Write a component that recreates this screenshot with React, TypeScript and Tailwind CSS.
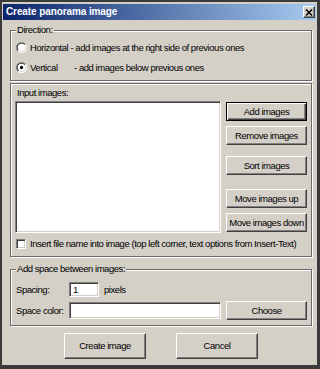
import React from "react";

const raised =
  "border border-t-white border-l-white border-r-[#404040] border-b-[#404040] shadow-[inset_-1px_-1px_0_#808080] bg-[#d4d0c8]";
const sunken =
  "border border-t-[#808080] border-l-[#808080] border-r-white border-b-white shadow-[inset_1px_1px_0_#404040,inset_-1px_-1px_0_#d4d0c8] bg-white";
const etched = "relative border border-[#6a6a6a] shadow-[1px_1px_0_#fff,inset_1px_1px_0_#fff]";

function Radio({ checked }: { checked?: boolean }) {
  return (
    <svg width="11" height="11" viewBox="0 0 12 12" className="shrink-0">
      <defs>
        <linearGradient id="rOuter" x1="0" y1="0" x2="1" y2="1">
          <stop offset="0.5" stopColor="#808080" />
          <stop offset="0.5" stopColor="#ffffff" />
        </linearGradient>
        <linearGradient id="rInner" x1="0" y1="0" x2="1" y2="1">
          <stop offset="0.5" stopColor="#404040" />
          <stop offset="0.5" stopColor="#d4d0c8" />
        </linearGradient>
      </defs>
      <circle cx="6" cy="6" r="6" fill="url(#rOuter)" />
      <circle cx="6" cy="6" r="5" fill="url(#rInner)" />
      <circle cx="6" cy="6" r="4" fill="#fff" />
      {checked && <circle cx="6" cy="6" r="1.8" fill="#000" />}
    </svg>
  );
}

function Btn({ label, def, className = "" }: { label: string; def?: boolean; className?: string }) {
  const cls = def
    ? "border border-black shadow-[inset_1px_1px_0_#fff,inset_-1px_-1px_0_#404040,inset_-2px_-2px_0_#808080] bg-[#d4d0c8]"
    : raised;
  return (
    <div className={`${cls} flex items-center justify-center text-black ${className}`}>{label}</div>
  );
}

export default function App() {
  return (
    <div className="w-[320px] h-[369px] bg-[#d4d0c8] border-l-2 border-t-2 border-r-[3px] border-b-[4px] border-[#3a3a3a] pl-[1px] pt-[2px] pr-[1px] font-['Liberation_Sans',Arial,sans-serif] text-[9.5px] tracking-[-0.45px] leading-[10px] text-black overflow-hidden">
      {/* title bar */}
      <div className="h-[16px] flex items-center justify-between pl-[3px] pr-[1px] bg-[linear-gradient(90deg,#0a246a,#a6caf0)]">
        <span className="text-white font-bold text-[10px] tracking-[-0.1px]">Create panorama image</span>
        <div className={`${raised} w-[12px] h-[12px] flex items-center justify-center`}>
          <svg width="8" height="7" viewBox="0 0 8 7">
            <path d="M1 0.5 L7 6.5 M7 0.5 L1 6.5" stroke="#000" strokeWidth="1.5" />
          </svg>
        </div>
      </div>

      <div className="pl-[7px] pr-[4px] flex flex-col">
        {/* Direction */}
        <div className={`${etched} mt-[10px] h-[51px] pl-[5px] pt-[11px] flex flex-col gap-[9px]`}>
          <span className="absolute left-[5px] -top-[6px] bg-[#d4d0c8] px-[1px]">Direction:</span>
          <div className="h-[11px] flex items-center gap-[3px]">
            <Radio />
            <span>Horizontal - add images at the right side of previous ones</span>
          </div>
          <div className="h-[11px] flex items-center gap-[3px]">
            <Radio checked />
            <span className="inline-block w-[41px]">Vertical</span>
            <span>- add images below previous ones</span>
          </div>
        </div>

        {/* Input images */}
        <div className={`${etched} mt-[2px] h-[174px] pl-[4px] pr-[4px] pt-[4px] flex flex-col`}>
          <span className="ml-[2px] h-[10px]">Input images:</span>
          <div className="mt-[3px] flex gap-[5px]">
            <div className={`${sunken} w-[206px] h-[132px]`} />
            <div className="flex flex-col w-[81px]">
              <Btn label="Add images" def className="mt-[1px] h-[19px]" />
              <Btn label="Remove images" className="mt-[5px] h-[19px]" />
              <Btn label="Sort images" className="mt-[11px] h-[19px]" />
              <Btn label="Move images up" className="mt-[14px] h-[19px]" />
              <Btn label="Move images down" className="mt-[5px] h-[19px]" />
            </div>
          </div>
          <div className="mt-[6px] h-[10px] flex items-center gap-[4px] ml-[1px]">
            <div className={`${sunken} w-[10px] h-[10px]`} />
            <span>Insert file name into image (top left corner, text options from Insert-Text)</span>
          </div>
        </div>

        {/* Add space */}
        <div className={`${etched} mt-[12px] h-[57px] pl-[5px] pt-[12px] flex flex-col`}>
          <span className="absolute left-[5px] -top-[6px] bg-[#d4d0c8] px-[1px]">Add space between images:</span>
          <div className="h-[15px] flex items-center">
            <span className="w-[53px]">Spacing:</span>
            <div className={`${sunken} w-[30px] h-[15px] pl-[3px] flex items-center`}>1</div>
            <span className="ml-[5px]">pixels</span>
          </div>
          <div className="mt-[4px] h-[19px] flex items-center">
            <span className="w-[53px]">Space color:</span>
            <div className={`${sunken} w-[152px] h-[17px]`} />
            <Btn label="Choose" className="ml-[5px] w-[81px] h-[19px]" />
          </div>
        </div>

        {/* bottom buttons */}
        <div className="mt-[7px] flex gap-[30px] pl-[54px]">
          <Btn label="Create image" className="w-[82px] h-[26px]" />
          <Btn label="Cancel" className="w-[82px] h-[26px]" />
        </div>
      </div>
    </div>
  );
}
